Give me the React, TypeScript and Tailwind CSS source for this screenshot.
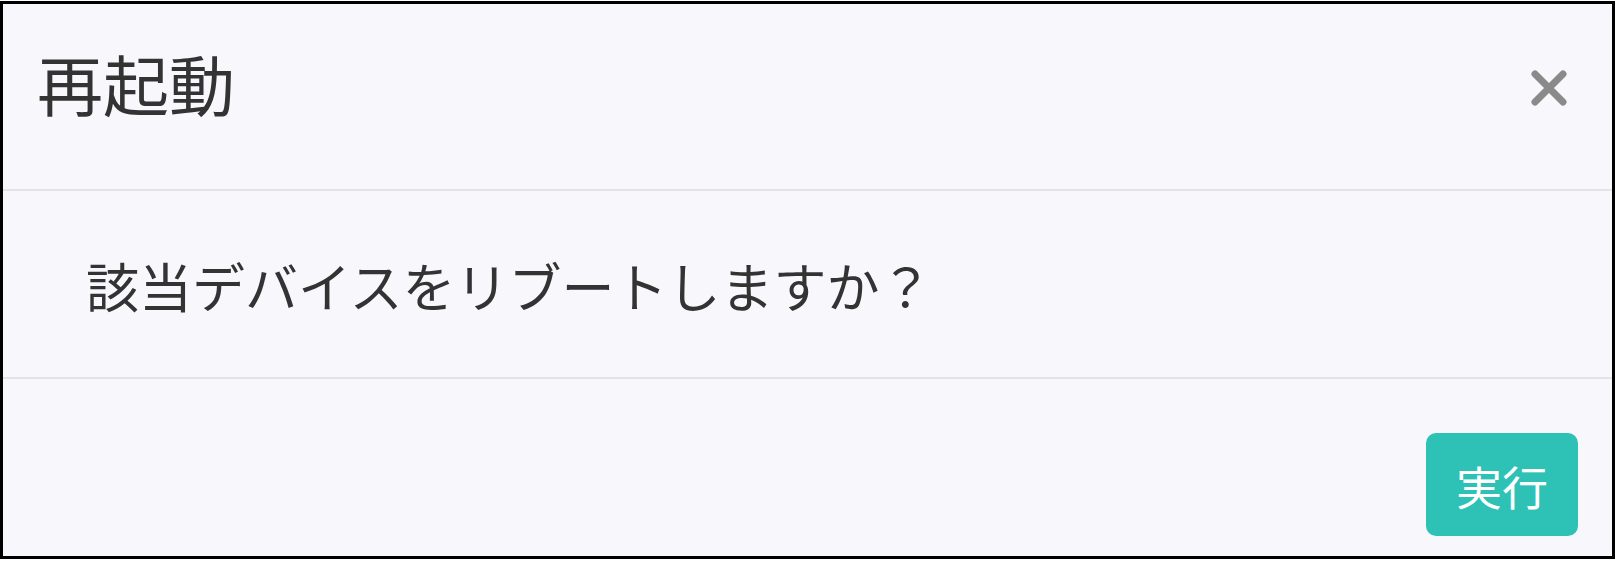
import { useState } from "react";

const jp = { fontFamily: '"Noto Sans CJK JP", "Noto Sans", sans-serif' };

const CloseIcon = () => (
  <svg width="38" height="38" viewBox="0 0 38 38" className="block">
    <path d="M5 5 L33 33 M33 5 L5 33" stroke="#8a8a8a" strokeWidth="7" strokeLinecap="round" />
  </svg>
);

const App = () => {
  const [open, setOpen] = useState(true);

  return (
    <div className="w-[1617px] h-[562px] bg-white overflow-hidden" style={jp}>
      {/* Modal frame */}
      <div className="mt-[1px] w-[1615px] h-[558px] border-[3px] border-black bg-[#f8f8fc] flex flex-col text-[#333333]">
        {/* Header */}
        <div className="h-[187px] shrink-0 border-b-2 border-[#e3e3e8] flex items-center justify-between pl-[34px] pr-[44px] pb-[30px]">
          <h4 className="text-[66px] leading-none font-normal">再起動</h4>
          <button type="button" onClick={() => setOpen(!open)} className="p-0 bg-transparent border-0 -mb-[12px]">
            <CloseIcon />
          </button>
        </div>

        {/* Body */}
        <div className="h-[188px] shrink-0 border-b-2 border-[#e3e3e8] pl-[83px] pt-[68px]">
          <p className="text-[53px] leading-none">該当デバイスをリブートしますか？</p>
        </div>

        {/* Footer */}
        <div className="flex-1 flex items-end justify-end pr-[34px] pb-[20px]">
          <button
            type="button"
            className="w-[152px] h-[103px] rounded-[10px] bg-[#2ec2b7] text-white text-[46px] leading-none flex items-center justify-center"
          >
            実行
          </button>
        </div>
      </div>
    </div>
  );
};

export default App;
